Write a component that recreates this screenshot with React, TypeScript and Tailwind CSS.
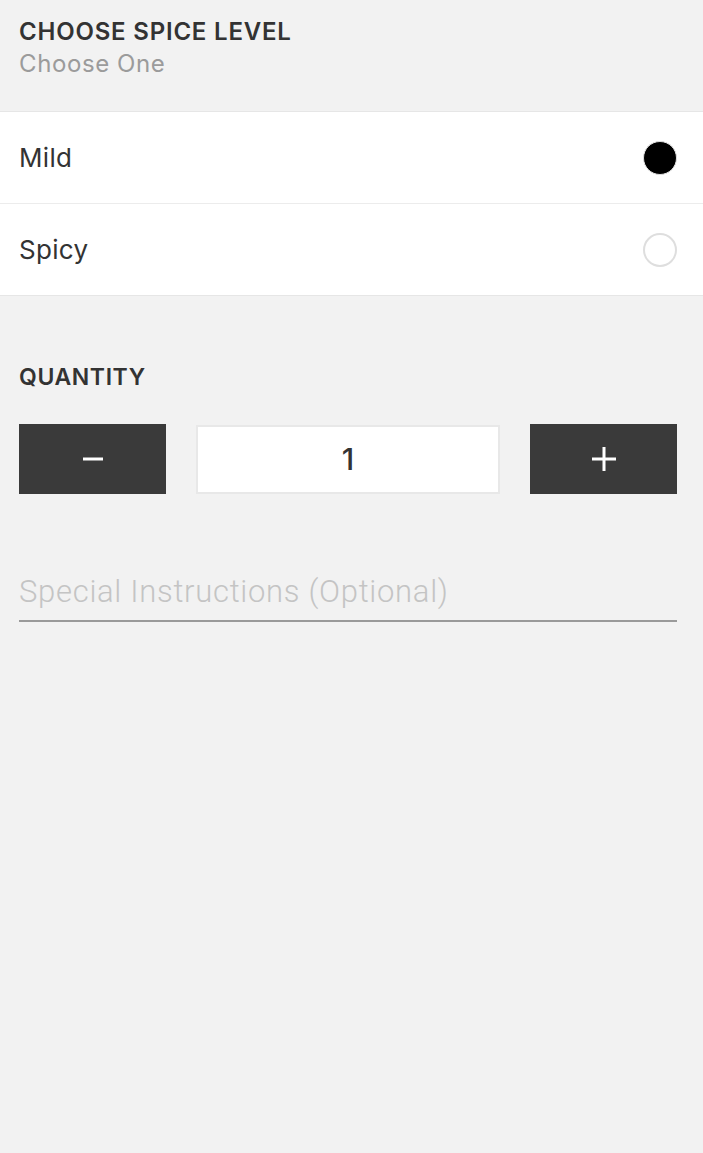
import React, { useState } from 'react';

const font = { fontFamily: 'Inter, "Noto Sans", sans-serif' };

const options = ['Mild', 'Spicy'];

const App: React.FC = () => {
    const [choice, setChoice] = useState('Mild');
    const [qty, setQty] = useState(1);

    return (
        <div className="min-h-[1153px] w-full bg-[#f2f2f2] text-[#333]" style={font}>
            {/* header */}
            <div className="pl-[19px] pr-[26px] pt-[17px] pb-[30px] border-b border-[#e6e6e6]">
                <div className="text-[24px] leading-[30px] font-semibold tracking-[0.8px] text-[#333]">CHOOSE SPICE LEVEL</div>
                <div className="text-[24px] leading-[34px] tracking-[0.6px] text-[#9b9b9b]">Choose One</div>
            </div>

            {/* options */}
            <div className="bg-white">
                {options.map((opt, i) => (
                    <button
                        key={opt}
                        onClick={() => setChoice(opt)}
                        className={'flex w-full h-[92px] items-center justify-between pl-[19px] pr-[26px] text-left ' + (i < options.length - 1 ? 'border-b border-[#ececec]' : 'border-b border-[#e6e6e6]')}
                    >
                        <span className="text-[26px] tracking-[0.3px] text-[#333]">{opt}</span>
                        {choice === opt ? (
                            <span className="h-[34px] w-[34px] rounded-full bg-black border border-[#e0e0e0]" />
                        ) : (
                            <span className="h-[34px] w-[34px] rounded-full border-2 border-[#dedede]" />
                        )}
                    </button>
                ))}
            </div>

            {/* quantity */}
            <div className="pl-[19px] pr-[26px] pt-[66px]">
                <div className="text-[23px] leading-[30px] font-semibold tracking-[0.6px] text-[#333]">QUANTITY</div>
                <div className="mt-[32px] flex gap-[30px] items-center">
                    <button onClick={() => setQty(Math.max(1, qty - 1))} className="flex h-[70px] w-[147px] items-center justify-center bg-[#3a3a3a]">
                        <svg width="24" height="24" viewBox="0 0 24 24"><path d="M2 12h20" stroke="white" strokeWidth="3" /></svg>
                    </button>
                    <div className="flex h-[69px] flex-1 items-center justify-center bg-white border-2 border-[#e8e8e8] text-[30px] font-medium text-[#333]">{qty}</div>
                    <button onClick={() => setQty(qty + 1)} className="flex h-[70px] w-[147px] items-center justify-center bg-[#3a3a3a]">
                        <svg width="28" height="28" viewBox="0 0 28 28"><path d="M2 14h24M14 2v24" stroke="white" strokeWidth="3" /></svg>
                    </button>
                </div>

                <div className="mt-[78px] border-b-2 border-[#9a9a9a] pb-[8px]">
                    <input
                        placeholder="Special Instructions (Optional)"
                        className="w-full bg-transparent text-[31px] leading-[40px] font-light tracking-[0.7px] text-[#333] placeholder:text-[#c4c4c4] outline-none"
                        style={{ fontFamily: 'Roboto, sans-serif' }}
                    />
                </div>
            </div>
        </div>
    );
};

export default App;
